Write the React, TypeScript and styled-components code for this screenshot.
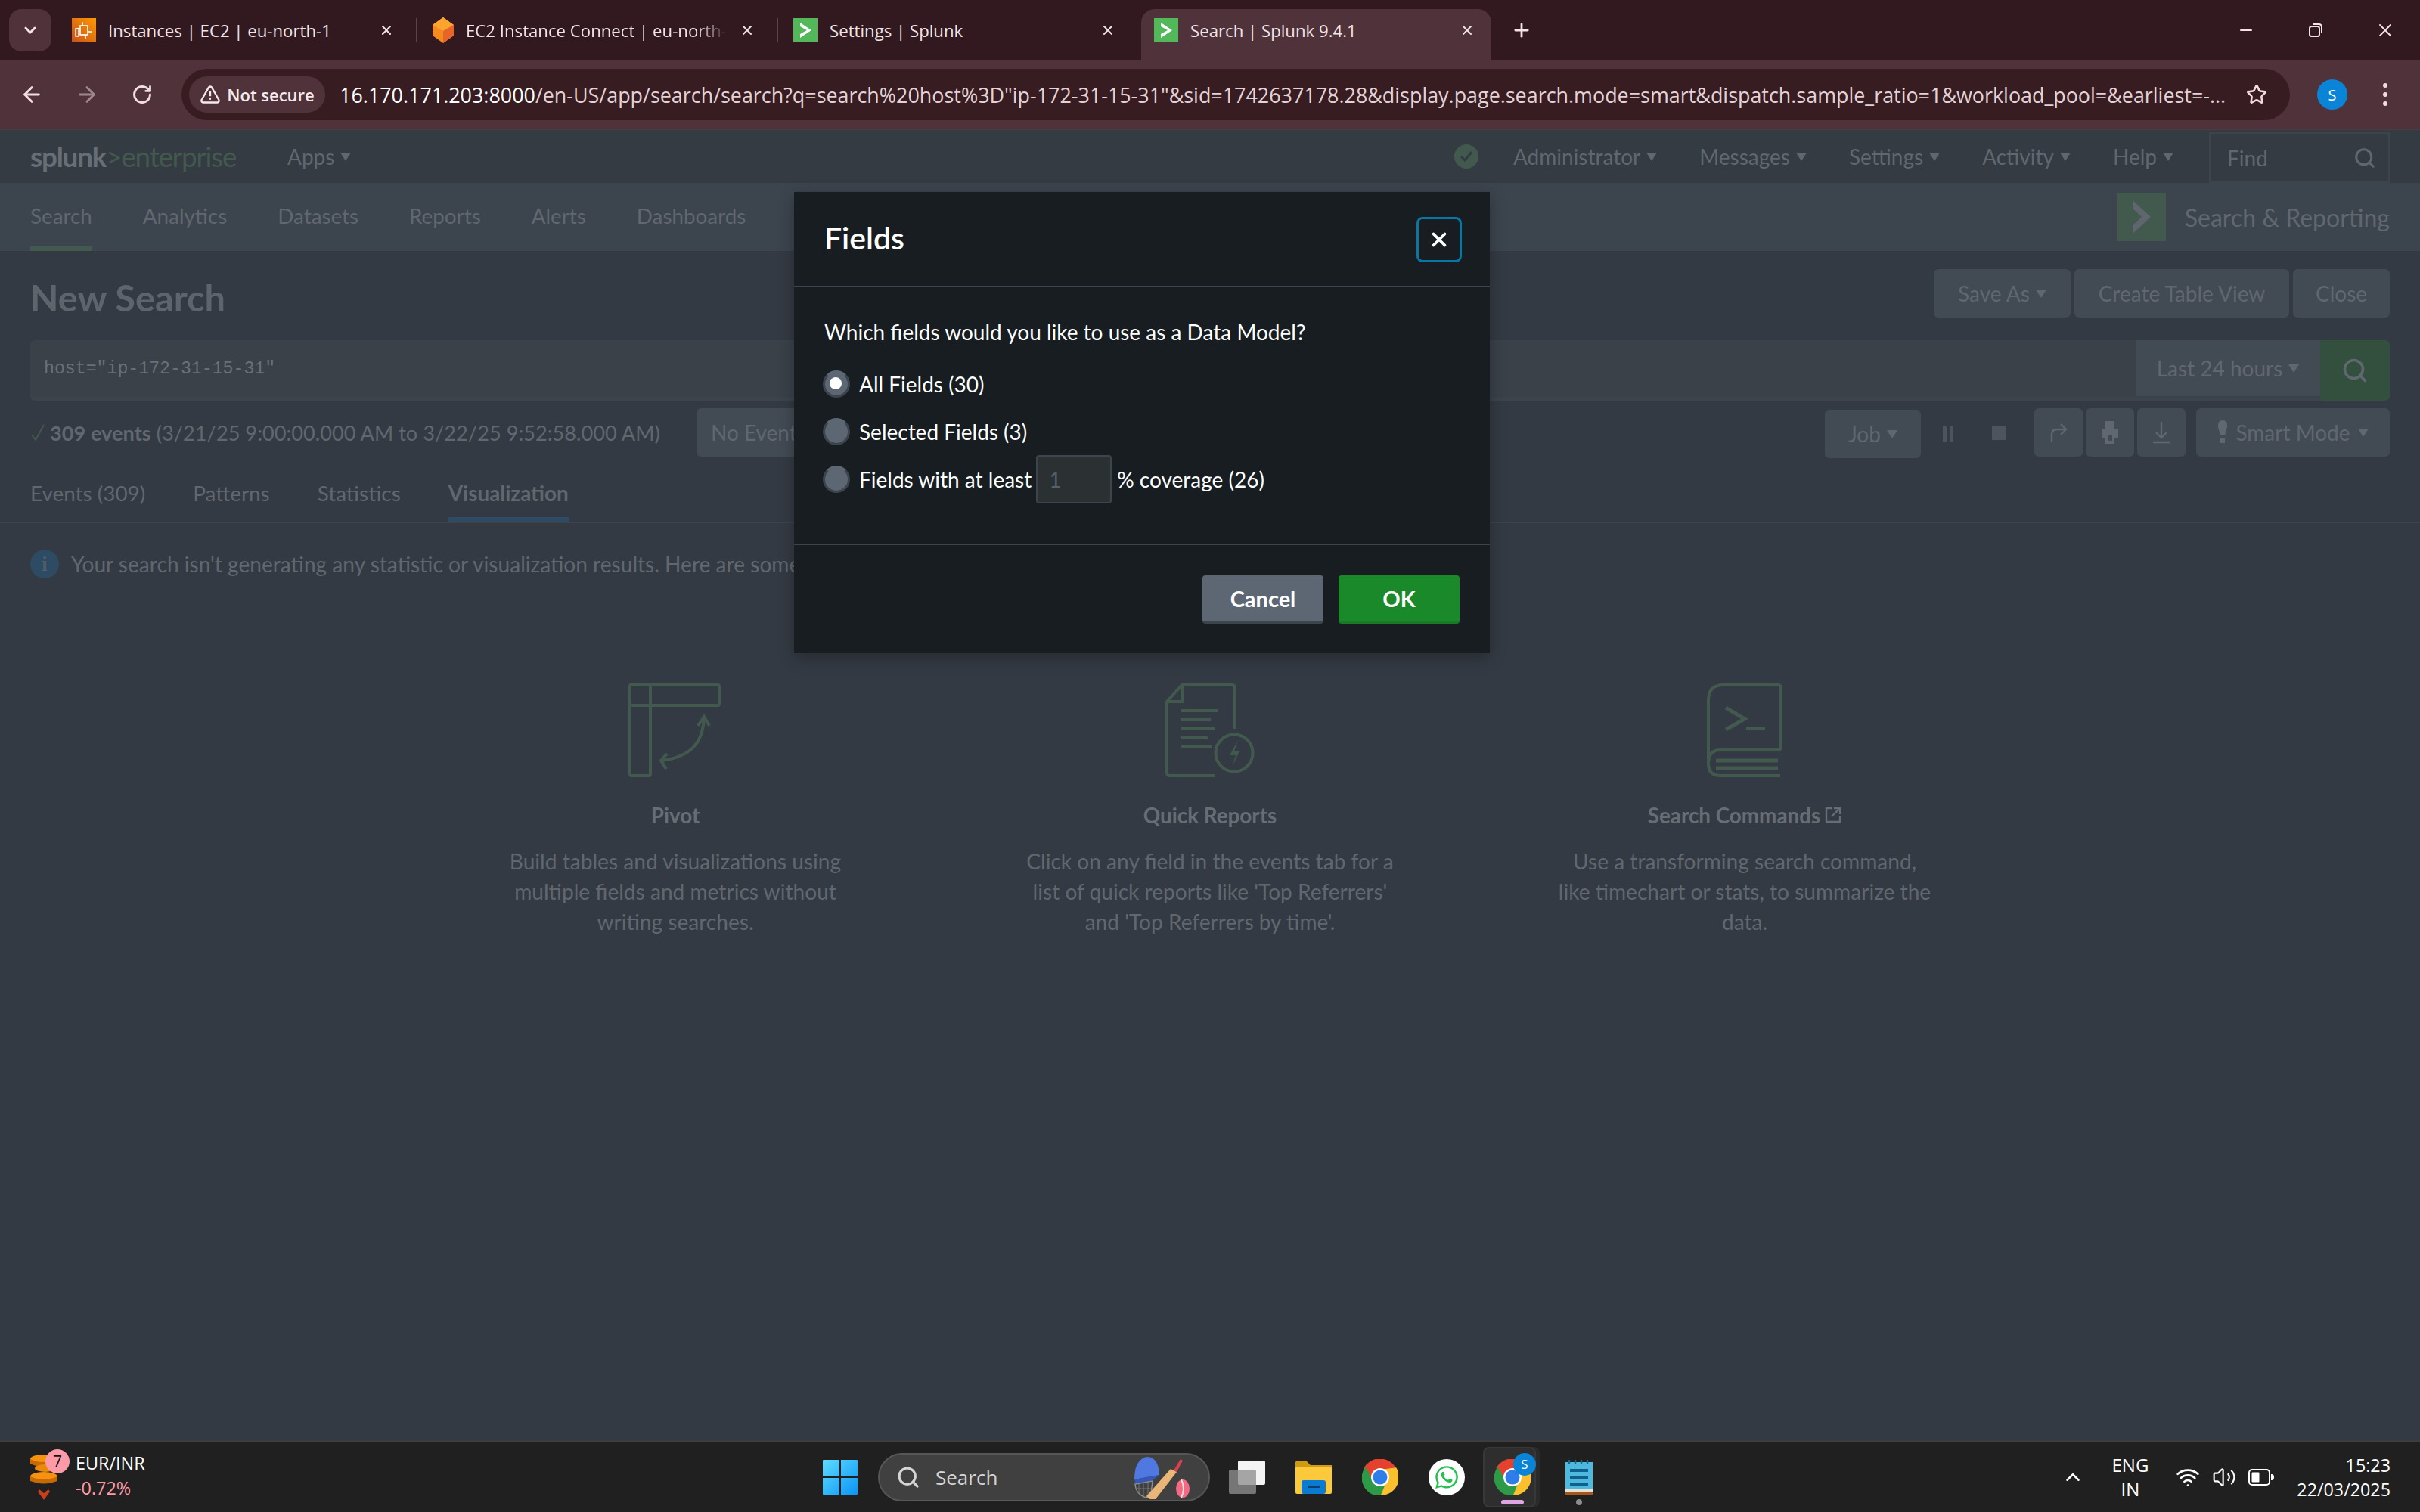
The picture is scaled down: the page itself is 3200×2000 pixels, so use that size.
import React from 'react';
import styled, { createGlobalStyle } from 'styled-components';
import {
  ArrowLeft,
  ArrowRight,
  ChevronDown,
  ChevronUp,
  Minus,
  Plus,
  RotateCw,
  Search,
  Star,
  TriangleAlert,
  Volume2,
  Wifi,
  X,
} from 'lucide-react';
import { FaWhatsapp } from 'react-icons/fa';

const DIM = '#60676f';
const DIM_GREEN = '#42594e';
const BTN = '#424a54';
const UI_FONT = '"Lato", "Liberation Sans", sans-serif';
const WIN_FONT = '"Open Sans", "Noto Sans", sans-serif';

const GlobalStyle = createGlobalStyle`
  html, body {
    margin: 0;
    padding: 0;
    background: #343a43;
  }
  * {
    box-sizing: border-box;
  }
`;

const Screen = styled.div`
  position: relative;
  width: 3200px;
  height: 2000px;
  display: flex;
  flex-direction: column;
  overflow: hidden;
  font-family: ${UI_FONT};
`;

/* browser chrome */
const TabStrip = styled.div`
  height: 80px;
  flex: none;
  display: flex;
  align-items: flex-end;
  padding-left: 12px;
  background: #31191f;
  font-family: ${WIN_FONT};
`;

const TabMenu = styled.div`
  width: 56px;
  height: 56px;
  margin: 0 10px 12px 0;
  border-radius: 16px;
  background: #50333a;
  color: #f5e4e7;
  display: flex;
  align-items: center;
  justify-content: center;
`;

const Tab = styled.div<{ $active?: boolean; $sep?: boolean }>`
  position: relative;
  width: ${(p) => (p.$active ? 463 : 477)}px;
  height: 68px;
  flex: none;
  display: flex;
  align-items: center;
  gap: 16px;
  padding: 0 ${(p) => (p.$active ? 22 : 34)}px 12px 17px;
  border-radius: 18px 18px 0 0;
  background: ${(p) => (p.$active ? '#50333a' : 'transparent')};
  color: #f1e4e6;

  ${(p) =>
    p.$sep
      ? `&::after {
    content: '';
    position: absolute;
    right: 3px;
    top: 12px;
    width: 2px;
    height: 32px;
    background: #5c444a;
  }`
      : ''}
`;

const TabTitle = styled.div<{ $fade?: boolean }>`
  flex: 1;
  min-width: 0;
  font-size: 22.2px;
  line-height: 32px;
  margin-top: 2px;
  white-space: nowrap;
  overflow: hidden;
  ${(p) =>
    p.$fade
      ? `-webkit-mask-image: linear-gradient(90deg, #000 88%, transparent 100%);
  mask-image: linear-gradient(90deg, #000 88%, transparent 100%);`
      : ''}
`;

const NewTab = styled.div`
  width: 40px;
  height: 56px;
  margin: 0 0 12px 20px;
  display: flex;
  align-items: center;
  justify-content: center;
  color: #f5e4e7;
`;

const WindowControls = styled.div`
  margin: 0 0 12px auto;
  height: 56px;
  display: flex;
  color: #f5e4e7;
`;

const WindowButton = styled.div`
  width: 92px;
  display: flex;
  align-items: center;
  justify-content: center;
`;

const Toolbar = styled.div`
  height: 92px;
  flex: none;
  display: flex;
  align-items: center;
  padding: 0 22px;
  background: #50333a;
  border-bottom: 2px solid #4a3d45;
  color: #f1dde1;
  font-family: ${WIN_FONT};
`;

const ToolIcon = styled.div<{ $muted?: boolean }>`
  width: 40px;
  height: 40px;
  margin-right: 33px;
  display: flex;
  align-items: center;
  justify-content: center;
  color: ${(p) => (p.$muted ? '#9d888d' : '#f1dde1')};
`;

const UrlBar = styled.div`
  width: 2788px;
  margin-left: -1px;
  height: 68px;
  flex: none;
  display: flex;
  align-items: center;
  padding: 0 20px 0 10px;
  border-radius: 34px;
  background: #371c22;
`;

const SecureChip = styled.div`
  width: 180px;
  height: 48px;
  flex: none;
  display: flex;
  align-items: center;
  justify-content: center;
  gap: 8px;
  border-radius: 24px;
  background: #50333a;
  font-size: 22px;
  font-weight: 600;
  color: #f6eaec;
`;

const UrlText = styled.div`
  width: 2500px;
  flex: none;
  margin-left: 19px;
  font-size: 26.9px;
  white-space: nowrap;
  overflow: hidden;
  color: #e3d3d6;

  b {
    font-weight: 400;
    color: #ffffff;
  }
`;

const Bookmark = styled.div`
  margin-left: 21px;
  display: flex;
  color: #f1dde1;
`;

const Avatar = styled.div<{ $size: number; $font: number }>`
  width: ${(p) => p.$size}px;
  height: ${(p) => p.$size}px;
  flex: none;
  border-radius: 50%;
  background: #0a84d6;
  color: #ffffff;
  font-size: ${(p) => p.$font}px;
  font-family: ${WIN_FONT};
  display: flex;
  align-items: center;
  justify-content: center;
`;

const ProfileSlot = styled.div`
  margin-left: 36px;
`;

const MoreDots = styled.div`
  margin-left: 47px;
  display: flex;
  flex-direction: column;
  gap: 6px;

  i {
    width: 6px;
    height: 6px;
    border-radius: 50%;
    background: #f1dde1;
  }
`;

/* splunk bars */
const SplunkPage = styled.div`
  flex: 1;
  min-height: 0;
  display: flex;
  flex-direction: column;
  background: #343a43;
  color: ${DIM};
`;

const AppBar = styled.div`
  height: 70px;
  flex: none;
  display: flex;
  align-items: center;
  padding: 0 40px;
  background: #343b43;
`;

const Logo = styled.div`
  width: 272px;
  font-size: 36.8px;
  line-height: 40px;
  letter-spacing: -1.2px;
  font-weight: 700;
  color: #686e75;
  white-space: nowrap;

  span {
    font-weight: 400;
    color: ${DIM_GREEN};
  }
`;

const AppMenu = styled.div`
  display: flex;
  align-items: center;
  gap: 8px;
  font-size: 28px;
  white-space: nowrap;
`;

const AppsMenu = styled(AppMenu)`
  margin-left: 68px;
`;

const AppBarRight = styled.div`
  margin-left: auto;
  display: flex;
  align-items: center;
  gap: 56px;
`;

const HealthDot = styled.div`
  width: 32px;
  height: 32px;
  margin-right: -10px;
  border-radius: 50%;
  background: ${DIM_GREEN};
  color: #343b43;
  display: flex;
  align-items: center;
  justify-content: center;
`;

const FindBox = styled.div`
  width: 239px;
  height: 67px;
  margin: 3px 0 0 -9px;
  padding: 0 16px 0 22px;
  display: flex;
  align-items: center;
  justify-content: space-between;
  border: 2px solid #3c444e;
  font-size: 28px;
`;

const Caret = styled.i`
  width: 0;
  height: 0;
  flex: none;
  border-left: 7px solid transparent;
  border-right: 7px solid transparent;
  border-top: 11px solid currentColor;
`;

const NavBar = styled.div`
  height: 90px;
  flex: none;
  display: flex;
  align-items: stretch;
  gap: 67px;
  padding: 0 40px;
  background: #3c444e;
`;

const NavItem = styled.div<{ $active?: boolean }>`
  display: flex;
  align-items: center;
  padding-top: 2px;
  font-size: 27.8px;
  white-space: nowrap;
  border-bottom: 6px solid ${(p) => (p.$active ? DIM_GREEN : 'transparent')};
`;

const AppTitle = styled.div`
  margin-left: auto;
  display: flex;
  align-items: center;
  gap: 25px;
  font-size: 32px;
  white-space: nowrap;
`;

const AppMark = styled.div`
  width: 64px;
  height: 64px;
  background: ${DIM_GREEN};
  display: flex;
  align-items: center;
  justify-content: center;
`;

const Main = styled.div`
  flex: 1;
  padding: 0 40px;
`;

const TitleRow = styled.div`
  margin-top: 24px;
  height: 64px;
  display: flex;
  align-items: flex-start;
  justify-content: space-between;
`;

const PageTitle = styled.h1`
  margin: 9px 0 0;
  font-size: 48.7px;
  line-height: 56px;
  font-weight: 700;
  color: #5d646c;
`;

const ButtonGroup = styled.div`
  display: flex;
  gap: 5px;
`;

const IconButtons = styled(ButtonGroup)`
  gap: 4px;
  margin-left: 16px;
`;

const GreyButton = styled.div<{ $w?: number; $h?: number; $offset?: number }>`
  ${(p) => (p.$w ? `width: ${p.$w}px;` : '')}
  height: ${(p) => p.$h ?? 64}px;
  margin-top: ${(p) => p.$offset ?? 0}px;
  flex: none;
  display: flex;
  align-items: center;
  justify-content: center;
  gap: 8px;
  border-radius: 6px;
  background: ${BTN};
  font-size: 28px;
  white-space: nowrap;
`;

const ModeButton = styled(GreyButton)`
  margin-left: 14px;
  gap: 10px;
`;

const SamplingButton = styled(GreyButton)`
  justify-content: flex-start;
  padding-left: 19px;
`;

const SearchBar = styled.div`
  margin-top: 30px;
  height: 80px;
  display: flex;
  align-items: center;
  padding-left: 18px;
  border-radius: 6px;
  background: #3a4149;
  border-bottom: 4px solid #3c444e;
`;

const QueryText = styled.div`
  flex: 1;
  font-family: "Liberation Mono", "DejaVu Sans Mono", monospace;
  font-size: 23.2px;
  color: #6a7077;
`;

const TimeRange = styled.div`
  width: 244px;
  height: 74px;
  margin-top: -2px;
  background: ${BTN};
  font-size: 28px;
  display: flex;
  align-items: center;
  justify-content: center;
  gap: 8px;
  white-space: nowrap;
`;

const SearchButton = styled.div`
  width: 92px;
  height: 80px;
  margin-bottom: -4px;
  border-radius: 0 6px 6px 0;
  background: #33503f;
  display: flex;
  align-items: center;
  justify-content: center;
`;

const StatusRow = styled.div`
  margin-top: 10px;
  height: 64px;
  display: flex;
  align-items: flex-start;
`;

const StatusText = styled.div`
  height: 64px;
  width: 881px;
  display: flex;
  align-items: center;
  font-size: 27.2px;
  white-space: nowrap;

  svg {
    margin-right: 6px;
  }
  b {
    font-weight: 700;
    margin-right: 7px;
  }
`;

const JobControls = styled.div`
  margin-left: auto;
  display: flex;
  align-items: flex-start;
`;

const Glyph = styled.div<{ $w: number; $offset?: number }>`
  width: ${(p) => p.$w}px;
  height: 64px;
  margin-top: ${(p) => p.$offset ?? 0}px;
  display: flex;
  align-items: center;
  justify-content: center;
`;

const ResultTabs = styled.div`
  margin: 16px -40px 0;
  height: 72px;
  padding: 0 40px;
  display: flex;
  gap: 63px;
  border-bottom: 2px solid #3c444e;
`;

const ResultTab = styled.div<{ $active?: boolean }>`
  display: flex;
  align-items: center;
  font-size: 27.9px;
  font-weight: ${(p) => (p.$active ? 700 : 400)};
  white-space: nowrap;
  border-bottom: 6px solid ${(p) => (p.$active ? '#2d4b63' : 'transparent')};
`;

const InfoRow = styled.div`
  margin-top: 35px;
  height: 38px;
  display: flex;
  align-items: center;
  gap: 16px;
  font-size: 28.1px;
  white-space: nowrap;
`;

const InfoIcon = styled.div`
  width: 38px;
  height: 38px;
  border-radius: 50%;
  background: #2d4b63;
  color: #4f5d68;
  font-family: "Liberation Serif", serif;
  font-weight: 700;
  font-size: 28px;
  display: flex;
  align-items: center;
  justify-content: center;
`;

const Cards = styled.div`
  margin-top: 139px;
  display: flex;
  justify-content: center;
`;

const Card = styled.div`
  width: 707px;
  display: flex;
  flex-direction: column;
  align-items: center;
`;

const CardIcon = styled.div`
  height: 124px;
  display: flex;
`;

const CardTitle = styled.div`
  margin-top: 33px;
  height: 34px;
  display: flex;
  align-items: center;
  gap: 6px;
  font-size: 27.8px;
  font-weight: 700;
  color: #676d75;
`;

const CardText = styled.p`
  margin: 24px 0 0;
  font-size: 28.1px;
  line-height: 40px;
  text-align: center;
  white-space: nowrap;
`;

/* dialog */
const Dialog = styled.div`
  position: absolute;
  left: 1050px;
  top: 254px;
  width: 920px;
  height: 610px;
  display: flex;
  flex-direction: column;
  background: #171d21;
  color: #ffffff;
  box-shadow: 0 6px 20px rgba(0, 0, 0, 0.28);
`;

const DialogHeader = styled.div`
  height: 126px;
  flex: none;
  display: flex;
  align-items: center;
  justify-content: space-between;
  padding: 0 37px 0 40px;
  border-bottom: 2px solid #3c444e;
`;

const DialogTitle = styled.h2`
  margin: -4px 0 0;
  font-size: 41px;
  font-weight: 600;
  color: #ffffff;
`;

const DialogClose = styled.div`
  width: 60px;
  height: 60px;
  margin-top: 2px;
  display: flex;
  align-items: center;
  justify-content: center;
  border: 3px solid #0877a6;
  border-radius: 8px;
`;

const DialogBody = styled.div`
  height: 341px;
  flex: none;
  padding: 42px 40px 0 38px;
  border-bottom: 2px solid #3c444e;
  font-size: 28px;
`;

const Question = styled.div`
  margin-left: 2px;
  line-height: 34px;
`;

const Options = styled.div`
  margin-top: 34px;
  display: flex;
  flex-direction: column;
  gap: 27px;
`;

const Option = styled.div`
  height: 36px;
  display: flex;
  align-items: center;
  white-space: nowrap;
`;

const Radio = styled.div<{ $on?: boolean }>`
  width: 36px;
  height: 36px;
  flex: none;
  margin-right: 12px;
  border-radius: 50%;
  background: #5c6773;
  border: 3px solid #3c444e;
  border-top-color: #5c6773;
  display: flex;
  align-items: center;
  justify-content: center;

  &::after {
    content: '';
    display: ${(p) => (p.$on ? 'block' : 'none')};
    width: 16px;
    height: 16px;
    margin: -2px 2px 0 0;
    border-radius: 50%;
    background: #ffffff;
  }
`;

const Coverage = styled.div`
  width: 100px;
  height: 64px;
  margin: 0 7px 0 6px;
  padding-left: 15px;
  display: flex;
  align-items: center;
  background: #2b3033;
  border: 2px solid #3c444e;
  border-radius: 4px;
  color: #55606b;
`;

const DialogFooter = styled.div`
  flex: 1;
  display: flex;
  justify-content: flex-end;
  gap: 20px;
  padding: 40px 40px 0 0;
`;

const FooterButton = styled.div<{ $primary?: boolean }>`
  width: 160px;
  height: 64px;
  display: flex;
  align-items: center;
  justify-content: center;
  border-radius: 4px;
  font-size: 29px;
  font-weight: 700;
  color: #ffffff;
  background: ${(p) => (p.$primary ? '#1a8929' : '#5c6773')};
  border-bottom: 4px solid ${(p) => (p.$primary ? '#187a24' : '#3c444e')};
`;

/* taskbar */
const Taskbar = styled.div`
  height: 95px;
  flex: none;
  display: flex;
  align-items: center;
  padding: 0 39px 0 40px;
  background: #202020;
  border-top: 2px solid #3d3d3d;
  color: #ffffff;
  font-family: ${WIN_FONT};
`;

const Weather = styled.div`
  position: relative;
  width: 300px;
  display: flex;
  align-items: center;
  gap: 24px;
`;

const CountBadge = styled.div`
  position: absolute;
  left: 20px;
  top: -5px;
  width: 32px;
  height: 32px;
  border-radius: 50%;
  background: #ff9aa8;
  color: #111111;
  font-size: 21px;
  display: flex;
  align-items: center;
  justify-content: center;
`;

const Ticker = styled.div`
  margin-top: -3px;
  font-size: 23.4px;
  line-height: 33px;
  white-space: nowrap;
`;

const TickerDown = styled.div`
  color: #ff99a4;
`;

const Dock = styled.div`
  margin-left: 748px;
  display: flex;
  align-items: center;
`;

const TaskSearch = styled.div`
  width: 439px;
  height: 64px;
  margin: 0 5px 0 27px;
  padding: 0 20px 0 22px;
  display: flex;
  align-items: center;
  gap: 20px;
  border-radius: 32px;
  background: #404040;
  border: 2px solid #575757;
  color: #d4d4d4;
  font-size: 26px;

  svg:last-child {
    margin-left: auto;
  }
`;

const DockSlot = styled.div<{ $active?: boolean }>`
  position: relative;
  width: ${(p) => (p.$active ? 70 : 88)}px;
  height: 80px;
  margin: ${(p) => (p.$active ? '0 13px 0 4px' : '0')};
  padding-left: ${(p) => (p.$active ? 8 : 0)}px;
  display: flex;
  align-items: center;
  justify-content: center;
  border-radius: 8px;
  ${(p) =>
    p.$active
      ? `background: #2e2e2e;
  border: 2px solid #383838;
  box-shadow: 5px 0 0 #2a2a2a;`
      : ''}
`;

const RunningBar = styled.i`
  position: absolute;
  left: 22px;
  bottom: 2px;
  width: 30px;
  height: 6px;
  border-radius: 3px;
  background: #dda6e2;
`;

const OpenDot = styled.i`
  position: absolute;
  left: 40px;
  bottom: 3px;
  width: 8px;
  height: 8px;
  border-radius: 50%;
  background: #8c8c8c;
`;

const DockBadge = styled.div`
  position: absolute;
  right: -2px;
  top: 6px;
`;

const WhatsAppDisc = styled.div`
  width: 48px;
  height: 48px;
  border-radius: 50%;
  background: #ffffff;
  color: #25c04f;
  display: flex;
  align-items: center;
  justify-content: center;
`;

const Tray = styled.div`
  margin-left: auto;
  display: flex;
  align-items: center;
`;

const TrayLang = styled.div`
  margin: 0 36px 0 36px;
  font-size: 24px;
  line-height: 32px;
  text-align: center;
`;

const TrayIcons = styled.div`
  display: flex;
  align-items: center;
  gap: 16px;
`;

const Clock = styled.div`
  margin-left: 30px;
  font-size: 23.3px;
  line-height: 32px;
  text-align: right;
  white-space: nowrap;
`;

const ChevronMark = () => (
  <svg width="30" height="46" viewBox="0 0 30 46">
    <path d="M3 1 L27 23 L3 45 L3 34 L15 23 L3 12 Z" fill="#5f666e" />
  </svg>
);

const SplunkFav = () => (
  <svg width="32" height="32" viewBox="0 0 32 32">
    <rect width="32" height="32" fill="#53b85a" />
    <path d="M9 6 L24 16 L9 26 V21 L18 16 L9 11 Z" fill="#ffffff" />
  </svg>
);

const Ec2Fav = () => (
  <svg width="32" height="32" viewBox="0 0 32 32">
    <defs>
      <linearGradient id="ec2" x1="0" y1="1" x2="1" y2="0">
        <stop offset="0" stopColor="#c8511b" />
        <stop offset="1" stopColor="#ff9900" />
      </linearGradient>
    </defs>
    <rect width="32" height="32" fill="url(#ec2)" />
    <rect x="11" y="10" width="10" height="12" fill="none" stroke="#fff" strokeWidth="1.6" />
    <path d="M6 14 H11 M21 18 H26 M14 5 V10 M18 22 V27" stroke="#fff" strokeWidth="1.6" />
    <rect x="5" y="14" width="4" height="10" fill="none" stroke="#fff" strokeWidth="1.4" />
  </svg>
);

const CubeFav = () => (
  <svg width="28" height="34" viewBox="0 0 28 34">
    <path d="M14 0 L28 10 V24 L14 34 L0 24 V10 Z" fill="#f58a1f" />
    <path d="M14 0 L28 10 L14 18 L0 10 Z" fill="#fba52e" />
    <path d="M14 18 L28 10 V24 L14 34 Z" fill="#e8652a" />
  </svg>
);

const RestoreIcon = () => (
  <svg width="20" height="20" viewBox="0 0 20 20" fill="none" stroke="currentColor" strokeWidth="2">
    <rect x="2" y="5" width="13" height="13" rx="2.5" />
    <path d="M6 2 H14 Q18 2 18 6 V14" />
  </svg>
);

const PivotIcon = () => (
  <svg width="124" height="124" viewBox="0 0 124 124" fill="none" stroke={DIM_GREEN} strokeWidth="4">
    <rect x="2" y="2" width="118" height="27" rx="2" />
    <rect x="2" y="2" width="27" height="120" rx="2" />
    <path d="M100 46 C98 76 86 96 45 102" />
    <path d="M92 56 L100 44 L107 56 M51 93 L43 102 L50 113" />
  </svg>
);

const ReportIcon = () => (
  <svg width="118" height="124" viewBox="0 0 118 124" fill="none" stroke={DIM_GREEN} strokeWidth="4">
    <path d="M66 122 H6 Q2 122 2 118 V24 L22 2 H88 Q92 2 92 6 V60" />
    <path d="M2 24 H22 V2" />
    <path d="M20 36 H70 M20 48 H60 M20 60 H65 M20 72 H56 M20 84 H61" />
    <circle cx="91" cy="92" r="24.5" />
    <path d="M96 75 L85 95 H93 L88 110 L98 90 H91 Z" fill={DIM_GREEN} stroke="none" />
  </svg>
);

const BookIcon = () => (
  <svg width="100" height="124" viewBox="0 0 100 124" fill="none" stroke={DIM_GREEN} strokeWidth="4">
    <path d="M98 88 V6 Q98 2 94 2 H22 Q2 2 2 22 V106 Q2 122 18 122 H97" />
    <path d="M98 88 H18 Q2 88 2 106" />
    <path d="M12 102 H94 M12 112 H94" strokeWidth="5" />
    <path d="M25 32 L50 47 L25 61" strokeWidth="5" />
    <path d="M52 60 H77" strokeWidth="4" />
  </svg>
);

const ExternalIcon = () => (
  <svg width="22" height="22" viewBox="0 0 22 22" fill="none" stroke="#676d75" strokeWidth="2.4">
    <path d="M9 2 H2 V20 H20 V13" />
    <path d="M9 13 L19 3 M12 2 H20 V10" />
  </svg>
);

const WindowsLogo = () => (
  <svg width="46" height="46" viewBox="0 0 46 46">
    <defs>
      <linearGradient id="win" x1="0" y1="0" x2="1" y2="1">
        <stop offset="0" stopColor="#5fdcff" />
        <stop offset="1" stopColor="#0a94f5" />
      </linearGradient>
    </defs>
    <path
      d="M1 0 H22 V22 H0 V1 Q0 0 1 0 Z M24 0 H45 Q46 0 46 1 V22 H24 Z M0 24 H22 V46 H1 Q0 46 0 45 Z M24 24 H46 V45 Q46 46 45 46 H24 Z"
      fill="url(#win)"
    />
  </svg>
);

const CricketIcon = () => (
  <svg width="80" height="58" viewBox="0 0 80 58">
    <path d="M2 32 Q2 6 18 2 Q34 2 35 26 Z" fill="#4f78e0" />
    <path d="M2 32 L35 26 L25 34 L4 38 Z" fill="#3557b5" />
    <path d="M3 38 Q4 52 18 56 L24 50 L26 34 Z" fill="none" stroke="#8f8f8f" strokeWidth="1.4" />
    <path d="M8 38 V50 M14 36 V54 M20 36 V52 M4 44 H24" stroke="#777" strokeWidth="1" />
    <path d="M18 54 L50 18 L58 22 L30 58 Q22 60 18 54 Z" fill="#eab678" />
    <path d="M54 20 L63 5 L66 7 L58 22 Z" fill="#d8414d" />
    <ellipse cx="66" cy="44" rx="9" ry="12" fill="#f46a86" />
    <path d="M64 32 Q70 44 64 56" stroke="#f3e5d0" strokeWidth="2" fill="none" />
  </svg>
);

const TaskViewIcon = () => (
  <svg width="48" height="44" viewBox="0 0 48 44">
    <rect x="12" y="0" width="36" height="32" rx="2" fill="#f4f4f4" />
    <rect x="0" y="12" width="36" height="32" rx="2" fill="#8e8e8e" fillOpacity="0.78" />
  </svg>
);

const FolderIcon = () => (
  <svg width="48" height="44" viewBox="0 0 48 44">
    <path d="M0 3 Q0 0 3 0 H14 L20 6 H48 V10 H0 Z" fill="#d29a10" />
    <rect y="8" width="48" height="36" rx="2" fill="#fcc83c" />
    <rect x="8" y="26" width="32" height="18" rx="3" fill="#0b7ad1" />
    <rect x="16" y="33" width="16" height="3" fill="#0a3f70" />
  </svg>
);

const ChromeLogo = () => (
  <svg width="48" height="48" viewBox="0 0 48 48">
    <path d="M24 14 H45.65 A24 24 0 0 0 2.35 12 L15.34 29 Z" fill="#e5412f" />
    <path d="M24 14 H45.65 A24 24 0 0 0 2.35 12 L15.34 29 Z" fill="#fbc02d" transform="rotate(120 24 24)" />
    <path d="M24 14 H45.65 A24 24 0 0 0 2.35 12 L15.34 29 Z" fill="#2d9a48" transform="rotate(240 24 24)" />
    <circle cx="24" cy="24" r="12" fill="#ffffff" />
    <circle cx="24" cy="24" r="9.5" fill="#2f7de8" />
  </svg>
);

const NotepadIcon = () => (
  <svg width="36" height="46" viewBox="0 0 36 46">
    <rect y="3" width="36" height="36" fill="#4fb9dd" />
    <rect y="39" width="36" height="3" fill="#e8e0d4" />
    <rect y="42" width="36" height="4" fill="#a8551a" />
    <path d="M5 0 V6 M13 0 V6 M21 0 V6 M29 0 V6" stroke="#17648c" strokeWidth="2.4" />
    <path d="M6 14 H30 M6 23 H30 M6 32 H30" stroke="#0f5f8f" strokeWidth="4" />
  </svg>
);

const CoinsIcon = () => (
  <svg width="36" height="64" viewBox="0 0 36 64">
    <ellipse cx="16" cy="8" rx="16" ry="6" fill="#f7920f" />
    <path d="M0 8 V14 Q16 22 32 14 V8 Q16 16 0 8 Z" fill="#c56a05" />
    <ellipse cx="20" cy="20" rx="14" ry="5" fill="#e98a0c" />
    <ellipse cx="18" cy="31" rx="18" ry="6" fill="#f7920f" />
    <path d="M0 31 V37 Q18 44 36 37 V31 Q18 39 0 31 Z" fill="#c56a05" />
    <path d="M12 48 L18 53 L24 48 L26 51 L18 62 L10 51 Z" fill="#c8401a" />
  </svg>
);

const BatteryIcon = () => (
  <svg width="34" height="22" viewBox="0 0 34 22" fill="none" stroke="#fff" strokeWidth="2">
    <rect x="1" y="1" width="27" height="20" rx="4" />
    <rect x="4.5" y="4.5" width="10" height="13" rx="1" fill="#fff" stroke="none" />
    <path d="M31 8 Q33 8 33 11 Q33 14 31 14 Z" fill="#fff" />
  </svg>
);

const cards = [
  {
    title: 'Pivot',
    icon: <PivotIcon />,
    lines: ['Build tables and visualizations using', 'multiple fields and metrics without', 'writing searches.'],
  },
  {
    title: 'Quick Reports',
    icon: <ReportIcon />,
    lines: ['Click on any field in the events tab for a', "list of quick reports like 'Top Referrers'", "and 'Top Referrers by time'."],
  },
  {
    title: 'Search Commands',
    icon: <BookIcon />,
    external: true,
    lines: ['Use a transforming search command,', 'like timechart or stats, to summarize the', 'data.'],
  },
];

export default function App() {
  return (
    <Screen>
      <GlobalStyle />
      <TabStrip>
        <TabMenu>
          <ChevronDown size={24} strokeWidth={3} />
        </TabMenu>
        <Tab $sep>
          <Ec2Fav />
          <TabTitle>Instances | EC2 | eu-north-1</TabTitle>
          <X size={20} strokeWidth={2.4} />
        </Tab>
        <Tab $sep>
          <CubeFav />
          <TabTitle $fade>EC2 Instance Connect | eu-north-1</TabTitle>
          <X size={20} strokeWidth={2.4} />
        </Tab>
        <Tab>
          <SplunkFav />
          <TabTitle>Settings | Splunk</TabTitle>
          <X size={20} strokeWidth={2.4} />
        </Tab>
        <Tab $active>
          <SplunkFav />
          <TabTitle>Search | Splunk 9.4.1</TabTitle>
          <X size={20} strokeWidth={2.4} />
        </Tab>
        <NewTab>
          <Plus size={28} strokeWidth={2.4} />
        </NewTab>
        <WindowControls>
          <WindowButton>
            <Minus size={24} strokeWidth={2} />
          </WindowButton>
          <WindowButton>
            <RestoreIcon />
          </WindowButton>
          <WindowButton>
            <X size={28} strokeWidth={1.6} />
          </WindowButton>
        </WindowControls>
      </TabStrip>

      <Toolbar>
        <ToolIcon>
          <ArrowLeft size={32} strokeWidth={2.2} />
        </ToolIcon>
        <ToolIcon $muted>
          <ArrowRight size={32} strokeWidth={2.2} />
        </ToolIcon>
        <ToolIcon>
          <RotateCw size={28} strokeWidth={2.4} />
        </ToolIcon>
        <UrlBar>
          <SecureChip>
            <TriangleAlert size={28} strokeWidth={2} />
            Not secure
          </SecureChip>
          <UrlText>
            <b>16.170.171.203:8000</b>
            /en-US/app/search/search?q=search%20host%3D"ip-172-31-15-31"&amp;sid=1742637178.28&amp;display.page.search.mode=smart&amp;dispatch.sample_ratio=1&amp;workload_pool=&amp;earliest=-...
          </UrlText>
          <Bookmark>
            <Star size={28} strokeWidth={2.2} />
          </Bookmark>
        </UrlBar>
        <ProfileSlot>
          <Avatar $size={40} $font={20}>S</Avatar>
        </ProfileSlot>
        <MoreDots>
          <i />
          <i />
          <i />
        </MoreDots>
      </Toolbar>

      <SplunkPage>
        <AppBar>
          <Logo>
            splunk<span>&gt;enterprise</span>
          </Logo>
          <AppsMenu>
            Apps <Caret />
          </AppsMenu>
          <AppBarRight>
            <HealthDot>
              <svg width="20" height="18" viewBox="0 0 20 18" fill="none" stroke="currentColor" strokeWidth="3">
                <path d="M3 9 L8 14 L17 3" />
              </svg>
            </HealthDot>
            <AppMenu>
              Administrator <Caret />
            </AppMenu>
            <AppMenu>
              Messages <Caret />
            </AppMenu>
            <AppMenu>
              Settings <Caret />
            </AppMenu>
            <AppMenu>
              Activity <Caret />
            </AppMenu>
            <AppMenu>
              Help <Caret />
            </AppMenu>
            <FindBox>
              Find
              <Search size={30} strokeWidth={2.4} />
            </FindBox>
          </AppBarRight>
        </AppBar>

        <NavBar>
          <NavItem $active>Search</NavItem>
          <NavItem>Analytics</NavItem>
          <NavItem>Datasets</NavItem>
          <NavItem>Reports</NavItem>
          <NavItem>Alerts</NavItem>
          <NavItem>Dashboards</NavItem>
          <AppTitle>
            <AppMark>
              <ChevronMark />
            </AppMark>
            Search &amp; Reporting
          </AppTitle>
        </NavBar>

        <Main>
          <TitleRow>
            <PageTitle>New Search</PageTitle>
            <ButtonGroup>
              <GreyButton $w={181}>
                Save As <Caret />
              </GreyButton>
              <GreyButton $w={284}>Create Table View</GreyButton>
              <GreyButton $w={128}>Close</GreyButton>
            </ButtonGroup>
          </TitleRow>

          <SearchBar>
            <QueryText>host="ip-172-31-15-31"</QueryText>
            <TimeRange>
              Last 24 hours <Caret />
            </TimeRange>
            <SearchButton>
              <Search size={36} strokeWidth={2.4} />
            </SearchButton>
          </SearchBar>

          <StatusRow>
            <StatusText>
              <svg width="20" height="24" viewBox="0 0 20 24" fill="none" stroke={DIM_GREEN} strokeWidth="2">
                <path d="M2 15 L7 22 L18 2" />
              </svg>
              <b>309 events</b> (3/21/25 9:00:00.000 AM to 3/22/25 9:52:58.000 AM)
            </StatusText>
            <SamplingButton $w={260}>No Event Sampling</SamplingButton>
            <JobControls>
              <GreyButton $w={127} $offset={2}>
                Job <Caret />
              </GreyButton>
              <Glyph $w={72} $offset={2}>
                <svg width="18" height="20" viewBox="0 0 18 20" fill="#4c545e">
                  <rect x="2" width="5" height="20" />
                  <rect x="11" width="5" height="20" />
                </svg>
              </Glyph>
              <Glyph $w={62} $offset={2}>
                <svg width="18" height="20" viewBox="0 0 18 20" fill="#4c545e">
                  <rect width="18" height="18" />
                </svg>
              </Glyph>
              <IconButtons>
                <GreyButton $w={64}>
                  <svg width="24" height="26" viewBox="0 0 24 26" fill="none" stroke={DIM} strokeWidth="2.4">
                    <path d="M3 25 V16 Q3 9 10 9 H22 M15 2 L22 9 L15 16" />
                  </svg>
                </GreyButton>
                <GreyButton $w={64}>
                  <svg width="22" height="30" viewBox="0 0 22 30" fill={DIM}>
                    <path d="M5 0 H17 V10 H22 V22 H17 V30 H5 V22 H0 V10 H5 Z M8 19 V26 H14 V19 Z" fillRule="evenodd" />
                  </svg>
                </GreyButton>
                <GreyButton $w={64}>
                  <svg width="24" height="30" viewBox="0 0 24 30" fill="none" stroke={DIM} strokeWidth="2.4">
                    <path d="M12 1 V22 M5 15 L12 22 L19 15 M1 28 H23" />
                  </svg>
                </GreyButton>
              </IconButtons>
              <ModeButton $w={256}>
                <svg width="14" height="32" viewBox="0 0 14 32" fill={DIM}>
                  <path d="M7 0 Q14 0 13 9 L10 20 H4 L1 9 Q0 0 7 0 Z" />
                  <rect x="4" y="24" width="6" height="6" />
                </svg>
                Smart Mode <Caret />
              </ModeButton>
            </JobControls>
          </StatusRow>

          <ResultTabs>
            <ResultTab>Events (309)</ResultTab>
            <ResultTab>Patterns</ResultTab>
            <ResultTab>Statistics</ResultTab>
            <ResultTab $active>Visualization</ResultTab>
          </ResultTabs>

          <InfoRow>
            <InfoIcon>i</InfoIcon>
            Your search isn't generating any statistic or visualization results. Here are some possible ways to get results.
          </InfoRow>

          <Cards>
            {cards.map((card) => (
              <Card key={card.title}>
                <CardIcon>{card.icon}</CardIcon>
                <CardTitle>
                  {card.title}
                  {card.external ? <ExternalIcon /> : null}
                </CardTitle>
                <CardText>
                  {card.lines.map((line) => (
                    <React.Fragment key={line}>
                      {line}
                      <br />
                    </React.Fragment>
                  ))}
                </CardText>
              </Card>
            ))}
          </Cards>
        </Main>
      </SplunkPage>

      <Taskbar>
        <Weather>
          <CoinsIcon />
          <CountBadge>7</CountBadge>
          <Ticker>
            EUR/INR
            <TickerDown>-0.72%</TickerDown>
          </Ticker>
        </Weather>
        <Dock>
          <WindowsLogo />
          <TaskSearch>
            <Search size={32} strokeWidth={2.4} />
            Search
            <CricketIcon />
          </TaskSearch>
          <DockSlot>
            <TaskViewIcon />
          </DockSlot>
          <DockSlot>
            <FolderIcon />
          </DockSlot>
          <DockSlot>
            <ChromeLogo />
          </DockSlot>
          <DockSlot>
            <WhatsAppDisc>
              <FaWhatsapp size={34} />
            </WhatsAppDisc>
          </DockSlot>
          <DockSlot $active>
            <ChromeLogo />
            <DockBadge>
              <Avatar $size={30} $font={17}>S</Avatar>
            </DockBadge>
            <RunningBar />
          </DockSlot>
          <DockSlot>
            <NotepadIcon />
            <OpenDot />
          </DockSlot>
        </Dock>
        <Tray>
          <ChevronUp size={30} strokeWidth={2} />
          <TrayLang>
            ENG
            <br />
            IN
          </TrayLang>
          <TrayIcons>
            <Wifi size={32} strokeWidth={2} />
            <Volume2 size={32} strokeWidth={1.6} />
            <BatteryIcon />
          </TrayIcons>
          <Clock>
            15:23
            <br />
            22/03/2025
          </Clock>
        </Tray>
      </Taskbar>

      <Dialog>
        <DialogHeader>
          <DialogTitle>Fields</DialogTitle>
          <DialogClose>
            <X size={30} strokeWidth={3} />
          </DialogClose>
        </DialogHeader>
        <DialogBody>
          <Question>Which fields would you like to use as a Data Model?</Question>
          <Options>
            <Option>
              <Radio $on />
              All Fields (30)
            </Option>
            <Option>
              <Radio />
              Selected Fields (3)
            </Option>
            <Option>
              <Radio />
              Fields with at least
              <Coverage>1</Coverage>
              % coverage (26)
            </Option>
          </Options>
        </DialogBody>
        <DialogFooter>
          <FooterButton>Cancel</FooterButton>
          <FooterButton $primary>OK</FooterButton>
        </DialogFooter>
      </Dialog>
    </Screen>
  );
}
